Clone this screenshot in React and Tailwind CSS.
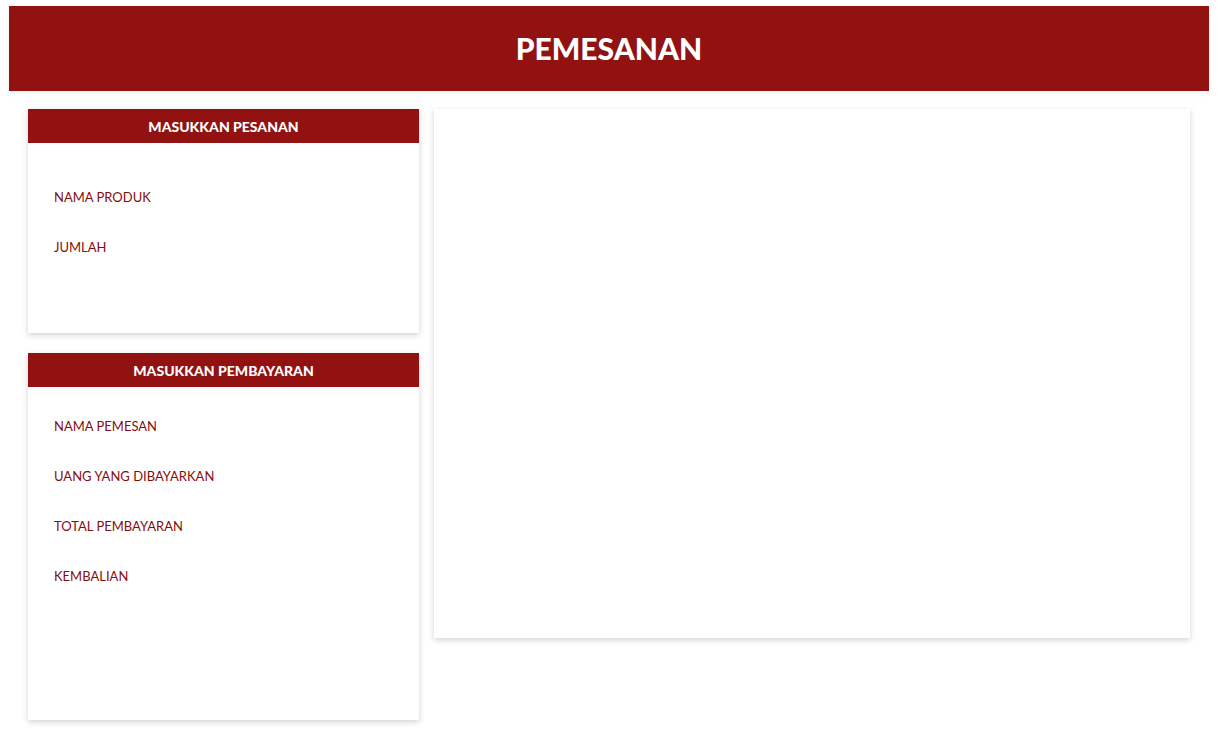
export default function App() {
  const orderFields = ['NAMA PRODUK', 'JUMLAH'];
  const payFields = ['NAMA PEMESAN', 'UANG YANG DIBAYARKAN', 'TOTAL PEMBAYARAN', 'KEMBALIAN'];

  return (
    <div className="min-h-[756px] bg-white font-['Lato',sans-serif]">
      <div className="pt-[6px] px-[9px]">
        <header className="h-[85px] bg-[#921111] flex items-center justify-center shadow-[0_2px_6px_rgba(0,0,0,0.06)]">
          <h1 className="text-[30px] font-black text-white">PEMESANAN</h1>
        </header>
      </div>

      <div className="flex gap-[15px] px-[28px] pt-[18px]">
        <div className="w-[391px] flex flex-col gap-[20px]">
          <section className="h-[224px] bg-white shadow-[0_2px_6px_rgba(0,0,0,0.18)]">
            <div className="h-[34px] bg-[#921111] flex items-center justify-center">
              <h2 className="text-[14px] font-black text-white">MASUKKAN PESANAN</h2>
            </div>
            <div className="px-[26px] pt-[30px]">
              {orderFields.map((f) => (
                <div key={f} className="h-[50px] flex items-center text-[13px] text-[#850d0d]">
                  {f}
                </div>
              ))}
            </div>
          </section>

          <section className="h-[367px] bg-white shadow-[0_2px_6px_rgba(0,0,0,0.18)]">
            <div className="h-[34px] bg-[#921111] flex items-center justify-center">
              <h2 className="text-[14px] font-black text-white">MASUKKAN PEMBAYARAN</h2>
            </div>
            <div className="px-[26px] pt-[15px]">
              {payFields.map((f) => (
                <div key={f} className="h-[50px] flex items-center text-[13px] text-[#850d0d]">
                  {f}
                </div>
              ))}
            </div>
          </section>
        </div>

        <section className="w-[756px] h-[529px] bg-white shadow-[0_2px_6px_rgba(0,0,0,0.18)]" />
      </div>
    </div>
  );
}
